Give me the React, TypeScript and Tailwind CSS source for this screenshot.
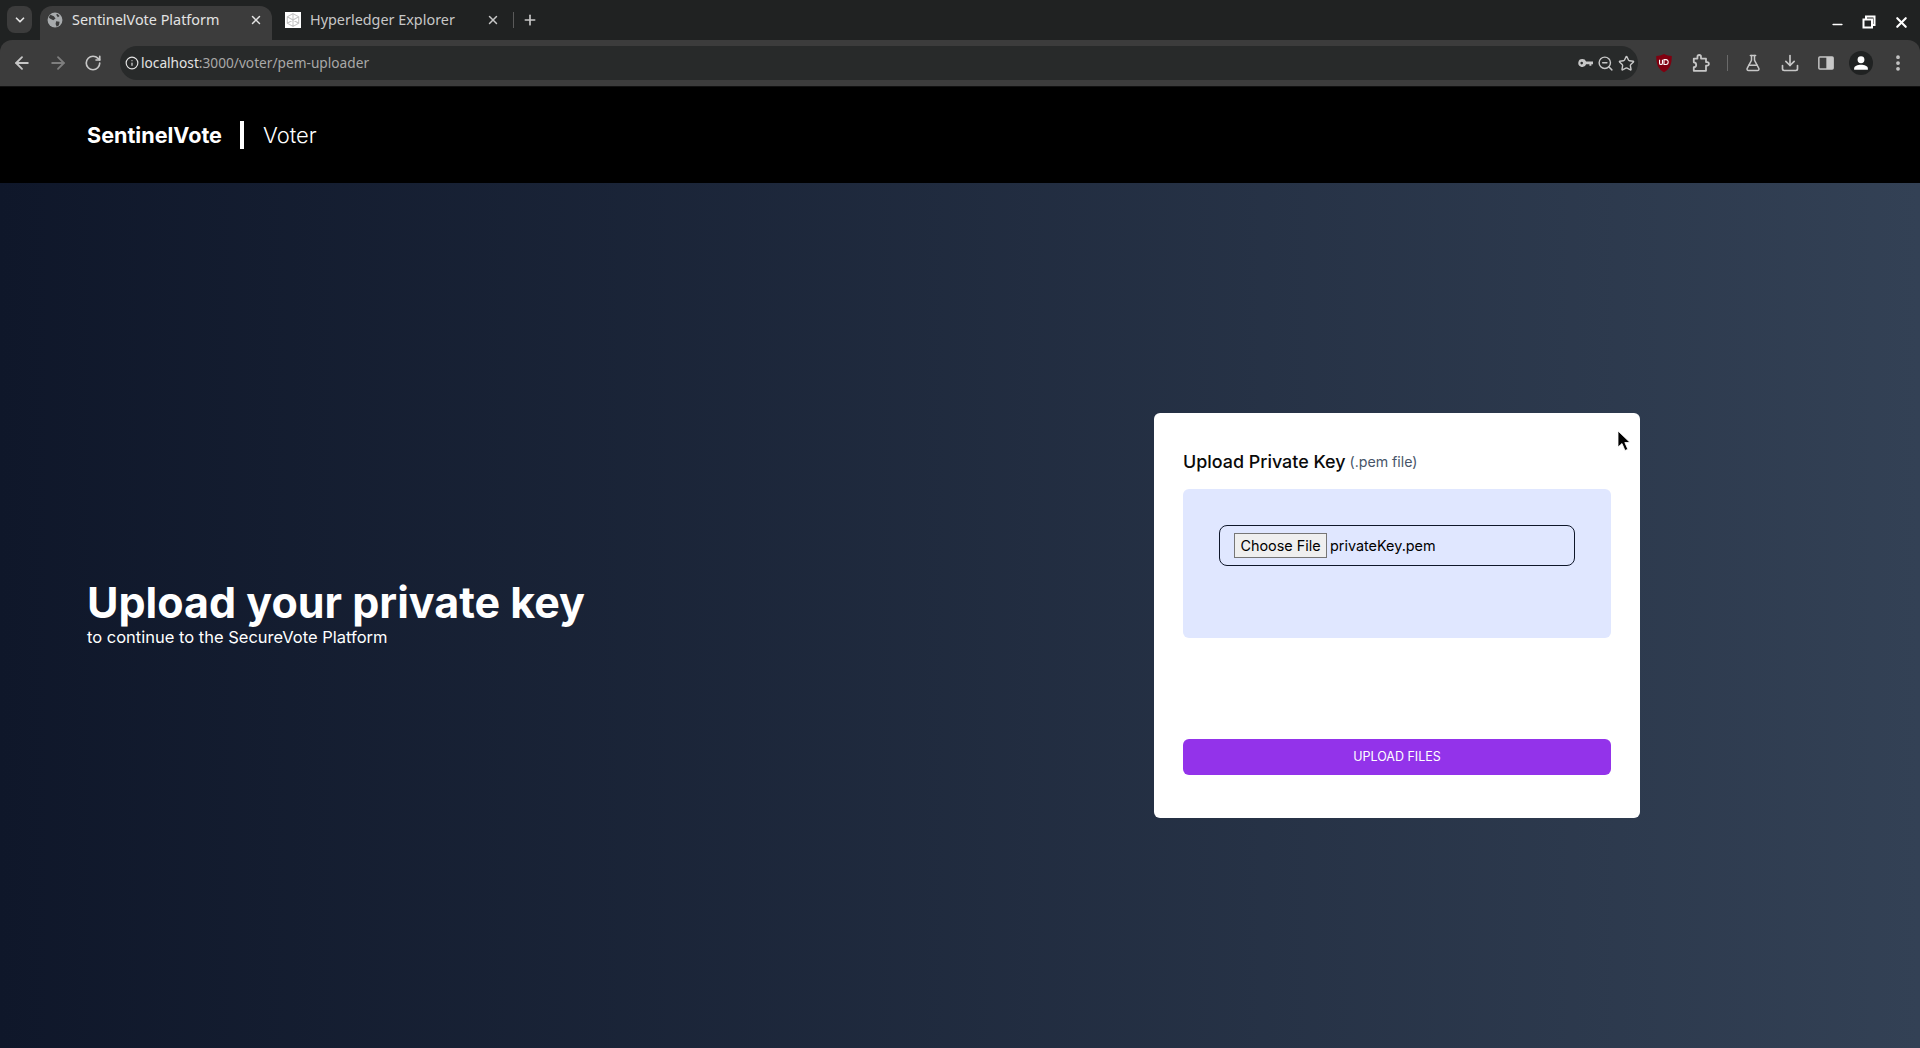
import React from 'react';
import { ArrowLeft, ArrowRight, RotateCw, ChevronDown, X, Plus, Minus, Info, ZoomOut, Star, FlaskConical, Download, EllipsisVertical } from 'lucide-react';

const KeyIcon = () => (
  <svg className="shrink-0" width="16" height="16" viewBox="0 0 16 16" fill="#c7c7c7">
    <path d="M4.500 4a4 4 0 0 1 3.600 2.400H15v2.800h-1.600v1.600h-2V9.200H8.100A4 4 0 1 1 4.500 4zm-.8 2.800a1.300 1.300 0 1 0 0 2.600 1.300 1.300 0 0 0 0-2.600z" fillRule="evenodd" />
  </svg>
);

const UblockIcon = () => (
  <svg className="shrink-0" width="18" height="20" viewBox="0 0 16 18">
    <path d="M8 .8c2 1.200 4.600 1.800 7 1.800 0 7-1.600 11.800-7 14.800C2.600 14.400 1 9.600 1 2.600c2.400 0 5-.6 7-1.800z" fill="#800010" />
    <path d="M4 6v3.200c0 1.600 2.600 1.600 2.600 0V6M8 6v4.400h1.800c2.600 0 2.600-4.400 0-4.400H8z" fill="none" stroke="#fff" strokeWidth="1" />
  </svg>
);

const ExtensionIcon = () => (
  <svg className="shrink-0" width="20" height="20" viewBox="0 0 18 18" fill="none" stroke="#c7c7c7" strokeWidth="1.600" strokeLinejoin="round">
    <path d="M2.500 5h3.300V3.400a1.600 1.600 0 0 1 3.200 0V5h4.500v3.200h1a1.600 1.600 0 0 1 0 3.200h-1V16H2.500v-3.300c1.800 0 2.200-1 2.200-2s-.4-2.300-2.200-2.300V5z" />
  </svg>
);

const SidePanelIcon = () => (
  <svg className="shrink-0" width="18" height="18" viewBox="0 0 16 16">
    <rect x="1" y="2" width="14" height="12" rx="1.500" fill="#c7c7c7" />
    <rect x="2.300" y="3.300" width="6" height="9.400" fill="#3c3c3c" />
  </svg>
);

const ProfileIcon = () => (
  <div className="flex h-6 w-6 shrink-0 items-center justify-center rounded-full bg-[#202222]">
    <svg width="16" height="16" viewBox="0 0 14 14" fill="#fff">
      <circle cx="7" cy="4.200" r="3" />
      <path d="M1 13v-1.200C1 9.800 4 8.600 7 8.600s6 1.200 6 3.200V13H1z" />
    </svg>
  </div>
);

const GlobeIcon = () => (
  <svg className="shrink-0" width="16" height="16" viewBox="0 0 14 14">
    <circle cx="7" cy="7" r="6.500" fill="#a8abad" />
    <path d="M3 2.500l3 1.200 1.500 2-2 1.500-3-1.500-1-1zM8 8l3 .5-.5 3-2 1.500-1-2.500zM9 1.500l2 2-1.500 1-1.500-2z" fill="#3c3c3c" />
  </svg>
);

const FabricIcon = () => (
  <div className="flex h-4 w-4 shrink-0 items-center justify-center bg-white">
    <svg width="14" height="14" viewBox="0 0 11 11" fill="none" stroke="#c4c4c4" strokeWidth="0.800">
      <path d="M5.500.5l4.500 2.500v5L5.500 10.500 1 8V3zM1 3l9 5M10 3L1 8M5.500.5v10" />
    </svg>
  </div>
);

const Cursor = () => (
  <svg className="absolute left-[1617px] top-[430px]" width="14" height="22" viewBox="0 0 14 22">
    <path d="M1 1v16l4-3.500 3 7 2.800-1.200-3-6.800H13z" fill="#000" stroke="#fff" strokeWidth="0.800" />
  </svg>
);

const BrowserChrome = () => (
  <div className="h-[87px] shrink-0 border-b border-[#111] bg-[#202222] font-['Noto_Sans',sans-serif]">
    <div className="flex h-[40px] items-end pl-[7px]">
      <div className="mb-[7px] flex h-[27px] w-[25px] shrink-0 items-center justify-center rounded-lg bg-[#3c3c3c]">
        <ChevronDown size={14} strokeWidth={3} color="#e3e3e3" />
      </div>
      <div className="ml-[8px] flex h-[34px] w-[232px] shrink-0 items-center rounded-t-xl bg-[#3c3c3c] pb-[6px] pl-[7px] pr-[9px]">
        <GlobeIcon />
        <span className="ml-[9px] flex-1 whitespace-nowrap text-[14.400px] text-[#e3e3e3]">SentinelVote Platform</span>
        <X size={14} strokeWidth={2.500} color="#e3e3e3" />
      </div>
      <div className="flex h-[34px] w-[280px] shrink-0 items-center pb-[6px] pl-[13px]">
        <FabricIcon />
        <span className="ml-[9px] w-[176px] shrink-0 whitespace-nowrap text-[14.400px] text-[#c7c7c7]">Hyperledger Explorer</span>
        <X size={14} strokeWidth={2.500} color="#c7c7c7" />
        <div className="ml-[13px] h-[16px] w-px shrink-0 bg-[#5a5a5a]" />
        <Plus className="ml-[8px] shrink-0" size={16} strokeWidth={2.500} color="#c7c7c7" />
      </div>
      <div className="mb-[8px] ml-auto flex items-center gap-[17px] pr-[10px]">
        <Minus className="mt-[5px]" size={15} strokeWidth={2.500} color="#fff" />
        <svg width="14" height="14" viewBox="0 0 14 14" fill="none" stroke="#fff" strokeWidth="2">
          <path d="M4 4V1.500h8.500V10H10M1.500 4.500h8.500v8H1.500z" />
        </svg>
        <X size={17} strokeWidth={3} color="#fff" />
      </div>
    </div>
    <div className="flex h-[46px] items-center rounded-t-xl bg-[#3c3c3c] pl-[12px]">
      <ArrowLeft className="shrink-0" size={20} strokeWidth={2.200} color="#c7c7c7" />
      <ArrowRight className="ml-[15.500px] shrink-0" size={20} strokeWidth={2.200} color="#7e7e7e" />
      <RotateCw className="ml-[16.500px] shrink-0" size={18} strokeWidth={2.200} color="#c7c7c7" />
      <div className="ml-[18px] flex h-[34px] w-[1518px] shrink-0 items-center rounded-full bg-[#282a2a] pl-[5px] pr-[3.500px]">
        <Info className="shrink-0" size={14} strokeWidth={2} color="#e3e3e3" />
        <span className="ml-[2px] flex-1 text-[13.700px]">
          <span className="text-[#e3e3e3]">localhost</span>
          <span className="text-[#a8a8a8]">:3000/voter/pem-uploader</span>
        </span>
        <KeyIcon />
        <ZoomOut className="ml-[2.500px] shrink-0" size={17} strokeWidth={2} color="#c7c7c7" />
        <Star className="ml-[4px] shrink-0" size={17} strokeWidth={2} color="#c7c7c7" />
      </div>
      <div className="ml-[17px] flex items-center">
        <UblockIcon />
        <div className="ml-[18px]"><ExtensionIcon /></div>
        <div className="ml-[16px] h-[16px] w-px bg-[#6a6a6a]" />
        <FlaskConical className="ml-[16px] shrink-0" size={18} strokeWidth={2} color="#c7c7c7" />
        <Download className="ml-[18px] shrink-0" size={20} strokeWidth={2} color="#c7c7c7" />
        <div className="ml-[17px]"><SidePanelIcon /></div>
        <div className="ml-[14px]"><ProfileIcon /></div>
        <EllipsisVertical className="ml-[15px] shrink-0" size={20} strokeWidth={2.500} color="#c7c7c7" />
      </div>
    </div>
  </div>
);

export default function App() {
  return (
    <div className="relative flex h-[1048px] w-[1920px] flex-col overflow-hidden font-['Inter',sans-serif]">
      <BrowserChrome />
      <header className="flex h-[96px] shrink-0 items-center bg-black pl-[87px] text-white">
        <span className="text-[21.600px] font-bold">SentinelVote</span>
        <div className="ml-[18px] h-[28px] w-[4px] bg-white" />
        <span className="ml-[19px] text-[22px] font-light">Voter</span>
      </header>
      <main className="flex flex-1 items-center justify-between bg-gradient-to-r from-[#0f172a] to-[#334155] pb-[6px] pl-[87px] pr-[280px]">
        <div className="text-white">
          <h1 className="pb-[2px] text-[43px] leading-[46px] font-bold">Upload your private key</h1>
          <p className="text-[16.500px] leading-[20px] font-normal">to continue to the SecureVote Platform</p>
        </div>
        <div className="mt-[6px] flex h-[405px] w-[486px] flex-col rounded-md bg-white px-[29px] pt-[37px]">
          <div className="flex h-[24px] items-center">
            <span className="text-[17.900px] font-medium text-[#0a0a0a]">Upload Private Key</span>
            <span className="ml-[4px] text-[14.200px] text-[#475569]">(.pem file)</span>
          </div>
          <div className="mt-[15px] h-[149px] rounded-md bg-[#e0e7ff] px-[36px] pt-[36px]">
            <div className="flex h-[41px] items-center rounded-lg border border-[#0f172a] pl-[14px]">
              <button className="h-[25px] w-[93px] rounded-none border border-[#767676] bg-[#efefef] text-[14.400px] text-black">Choose File</button>
              <span className="ml-[3px] text-[14.400px] text-black">privateKey.pem</span>
            </div>
          </div>
          <button className="mt-[101px] h-[36px] rounded-md bg-[#9333ea] text-[12.500px] font-normal text-white">UPLOAD FILES</button>
        </div>
      </main>
      <Cursor />
    </div>
  );
}
